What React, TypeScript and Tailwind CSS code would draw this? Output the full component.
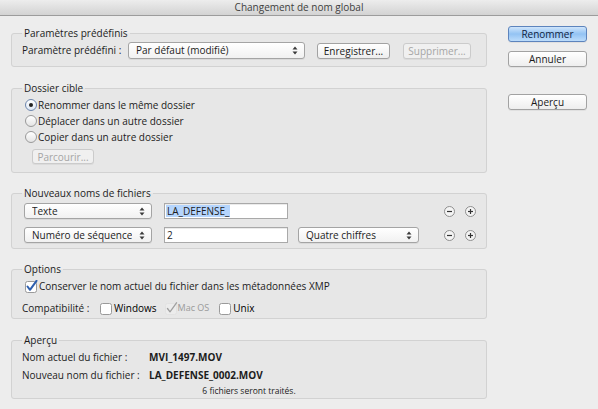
import type { ReactNode } from 'react'

function Arrows() {
  return (
    <svg width="6" height="9" viewBox="0 0 6 9" className="shrink-0">
      <path d="M3 0.5 L5.5 3.5 H0.5 Z" fill="#3a3a3a" />
      <path d="M3 8.5 L0.5 5.5 H5.5 Z" fill="#3a3a3a" />
    </svg>
  )
}

function Select({ label, className = '' }: { label: string; className?: string }) {
  return (
    <div
      className={`flex items-center justify-between rounded-[3px] border border-[#a4a4a4] bg-linear-to-b from-white to-[#f1f1f1] pl-[7px] pr-[6px] shadow-[0_1px_0_rgba(0,0,0,0.06)] ${className}`}
    >
      <span className="truncate">{label}</span>
      <Arrows />
    </div>
  )
}

function Button({
  label,
  className = '',
  disabled,
  primary,
}: {
  label: string
  className?: string
  disabled?: boolean
  primary?: boolean
}) {
  let look = 'border-[#a2a2a2] bg-linear-to-b from-white to-[#eeeeee] text-[#1a1a1a]'
  if (primary) look = 'border-[#5d84bd] bg-linear-to-b from-[#cfe5fb] via-[#93c3f3] to-[#bcdcfb] text-[#10233f]'
  if (disabled) look = 'border-[#cbcbcb] bg-[#f0f0f0] text-[#a5a5a5]'
  return (
    <div
      className={`flex h-4 items-center justify-center rounded-[3px] border leading-none shadow-[0_1px_0_rgba(0,0,0,0.05)] ${look} ${className}`}
    >
      {label}
    </div>
  )
}

function Radio({ checked }: { checked?: boolean }) {
  return (
    <span
      className={`flex h-[12px] w-[12px] shrink-0 items-center justify-center rounded-full border ${
        checked ? 'border-[#6d86ad] bg-linear-to-b from-white to-[#dfe8f4]' : 'border-[#9a9a9a] bg-linear-to-b from-white to-[#e4e4e4]'
      }`}
    >
      {checked && <span className="h-[4px] w-[4px] rounded-full bg-[#222]" />}
    </span>
  )
}

function Checkbox({ checked, disabled }: { checked?: boolean; disabled?: boolean }) {
  return (
    <svg width="13" height="13" viewBox="0 0 13 13" className="shrink-0">
      <rect
        x="0.5"
        y="1.5"
        width="11"
        height="11"
        rx="2"
        fill={disabled ? '#ececec' : 'white'}
        stroke={disabled ? '#e2e2e2' : '#9a9a9a'}
      />
      {checked && (
        <path
          d="M2.5 6.5 L5 9.8 L11.5 0.8"
          fill="none"
          stroke={disabled ? '#a0a0a0' : '#2d5fae'}
          strokeWidth={disabled ? 1.3 : 2}
          strokeLinecap="round"
          strokeLinejoin="round"
        />
      )}
    </svg>
  )
}

function Round({ plus }: { plus?: boolean }) {
  return (
    <svg width="11" height="11" viewBox="0 0 11 11">
      <circle cx="5.5" cy="5.5" r="5" fill="#f4f4f4" stroke="#8f8f8f" />
      <path d="M3 5.5 H8" stroke="#333" strokeWidth="1.2" />
      {plus && <path d="M5.5 3 V8" stroke="#333" strokeWidth="1.2" />}
    </svg>
  )
}

function Group({ title, className = '', children }: { title: string; className?: string; children: ReactNode }) {
  return (
    <fieldset className={`rounded-[3px] border border-[#d2d2d2] bg-[#e7e7e7] ${className}`}>
      <legend className="ml-[10px] px-[2px] leading-[14px]">{title}</legend>
      {children}
    </fieldset>
  )
}

export default function App() {
  return (
    <div className="h-[409px] w-[598px] overflow-hidden bg-[#ededed] font-['Open_Sans',sans-serif] text-[10px] text-[#1c1c1c]">
      <div className="flex h-[16px] items-center justify-center border-b border-[#9c9c9c] bg-linear-to-b from-[#ededed] to-[#d3d3d3] text-[10px] text-[#404040]">
        Changement de nom global
      </div>

      <div className="flex pl-[11px] pt-[10px]">
        <div className="flex w-[476px] flex-col">
          <Group title="Paramètres prédéfinis">
            <div className="flex items-center pb-[7px] pl-[10px] pt-[2px]">
              <span className="w-[106px]">Paramètre prédéfini :</span>
              <Select label="Par défaut (modifié)" className="h-[17px] w-[177px]" />
              <Button label="Enregistrer..." className="ml-[12px] w-[73px]" />
              <Button label="Supprimer..." disabled className="ml-[13px] w-[68px]" />
            </div>
          </Group>

          <Group title="Dossier cible" className="mt-[14px]">
            <div className="flex flex-col pb-[8px] pl-[13px] pt-[2px]">
              {[
                ['Renommer dans le même dossier', true],
                ['Déplacer dans un autre dossier', false],
                ['Copier dans un autre dossier', false],
              ].map(([label, on]) => (
                <div key={label as string} className="flex h-4 items-center gap-[1px]">
                  <Radio checked={on as boolean} />
                  <span>{label}</span>
                </div>
              ))}
              <Button label="Parcourir..." disabled className="ml-[7px] mt-[4px] h-[15px] w-[62px]" />
            </div>
          </Group>

          <Group title="Nouveaux noms de fichiers" className="mt-[13px]">
            <div className="flex flex-col pb-[5px] pl-[12px] pr-[10px] pt-[3px]">
              <div className="flex h-4 items-center">
                <Select label="Texte" className="h-4 w-[128px]" />
                <div className="ml-[12px] flex h-4 w-[124px] items-center border border-[#a9a9a9] bg-white pl-[1px] shadow-[inset_0_1px_0_rgba(0,0,0,0.08)]">
                  <span className="bg-[#b5d5fd] px-[1px] leading-[12px]">LA_DEFENSE_</span>
                </div>
                <div className="ml-auto flex gap-[10px]">
                  <Round />
                  <Round plus />
                </div>
              </div>
              <div className="mt-[8px] flex h-4 items-center">
                <Select label="Numéro de séquence" className="h-4 w-[128px]" />
                <div className="ml-[12px] flex h-4 w-[124px] items-center border border-[#a9a9a9] bg-white pl-[2px] shadow-[inset_0_1px_0_rgba(0,0,0,0.08)]">
                  2
                </div>
                <Select label="Quatre chiffres" className="ml-[10px] h-4 w-[121px]" />
                <div className="ml-auto flex gap-[10px]">
                  <Round />
                  <Round plus />
                </div>
              </div>
            </div>
          </Group>

          <Group title="Options" className="mt-[13px]">
            <div className="flex flex-col pb-[3px] pl-[13px] pt-[3px]">
              <div className="flex h-[14px] items-center gap-[1px]">
                <Checkbox checked />
                <span>Conserver le nom actuel du fichier dans les métadonnées XMP</span>
              </div>
              <div className="-ml-[3px] mt-[8px] flex h-[14px] items-center">
                <span className="w-[78px]">Compatibilité :</span>
                <Checkbox />
                <span className="ml-[1px] font-medium text-black">Windows</span>
                <span className="ml-[8px]">
                  <Checkbox checked disabled />
                </span>
                <span className="text-[9px] text-[#9a9a9a]">Mac OS</span>
                <span className="ml-[10px]">
                  <Checkbox />
                </span>
                <span className="ml-[1px] font-medium text-black">Unix</span>
              </div>
            </div>
          </Group>

          <Group title="Aperçu" className="mt-[14px]">
            <div className="flex flex-col pb-[1px] pl-[10px] pt-[3px]">
              <div className="flex h-[14px] items-center">
                <span className="w-[127px]">Nom actuel du fichier :</span>
                <span className="font-bold">MVI_1497.MOV</span>
              </div>
              <div className="mt-[4px] flex h-[14px] items-center">
                <span className="w-[127px]">Nouveau nom du fichier :</span>
                <span className="font-bold">LA_DEFENSE_0002.MOV</span>
              </div>
              <div className="mt-[2px] h-[13px] pr-[10px] text-center text-[8.5px] leading-[13px]">
                6 fichiers seront traités.
              </div>
            </div>
          </Group>
        </div>

        <div className="ml-[21px] flex w-[79px] flex-col">
          <Button label="Renommer" primary />
          <Button label="Annuler" className="mt-[9px]" />
          <Button label="Aperçu" className="mt-[27px]" />
        </div>
      </div>
    </div>
  )
}
